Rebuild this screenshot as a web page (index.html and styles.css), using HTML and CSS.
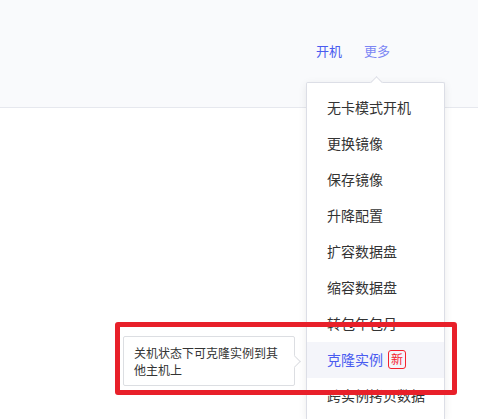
FILE: index.html
```html
<!DOCTYPE html>
<html lang="zh-CN">
<head>
<meta charset="utf-8">
<link rel="stylesheet" href="styles.css">
</head>
<body>
<div class="header">
  <nav class="actions">
    <a class="link">开机</a>
    <a class="link more">更多</a>
  </nav>
</div>
<div class="menu">
  <span class="arrow"></span>
  <ul class="list">
    <li class="item">无卡模式开机</li>
    <li class="item">更换镜像</li>
    <li class="item">保存镜像</li>
    <li class="item">升降配置</li>
    <li class="item">扩容数据盘</li>
    <li class="item">缩容数据盘</li>
    <li class="item">转包年包月</li>
    <li class="item active">克隆实例<span class="badge">新</span></li>
    <li class="item">跨实例拷贝数据</li>
  </ul>
</div>
<div class="tooltip">关机状态下可克隆实例到其他主机上<span class="tip-arrow"></span></div>
<div class="highlight"></div>
</body>
</html>
```

FILE: styles.css
```css
html, body {
  margin: 0;
  padding: 0;
  background: #ffffff;
  font-family: "Noto Sans CJK SC", "Noto Sans", sans-serif;
  overflow: hidden;
  height: 419px;
}
.header {
  height: 107px;
  background: #f9fafc;
  border-bottom: 1px solid #e6e8ee;
}
.actions {
  display: flex;
  justify-content: flex-end;
  gap: 22px;
  padding: 41px 88px 0 0;
  font-size: 13px;
  line-height: 20px;
}
.link {
  color: #4a5cf0;
  cursor: pointer;
}
.link.more {
  color: #7c86f4;
}
.menu {
  position: absolute;
  left: 306px;
  top: 82px;
  width: 137px;
  height: 336px;
  background: #fff;
  border: 1px solid #dcdee6;
  border-bottom: none;
  border-radius: 2px 2px 0 0;
  box-shadow: 0 2px 8px rgba(0, 0, 0, 0.08);
}
.arrow {
  position: absolute;
  top: -5px;
  left: 65px;
  width: 8px;
  height: 8px;
  background: #fff;
  border-left: 1px solid #dcdee6;
  border-top: 1px solid #dcdee6;
  transform: rotate(45deg);
}
.list {
  list-style: none;
  margin: 0;
  padding: 7px 0 0;
  height: 329px;
  overflow: hidden;
}
.item {
  height: 36px;
  line-height: 35px;
  padding-left: 20px;
  font-size: 14px;
  color: #333;
  white-space: nowrap;
}
.item.active {
  background: #f4f5fa;
  color: #4a5cf0;
}
.badge {
  display: inline-block;
  margin-left: 5px;
  padding: 0 2px;
  height: 17px;
  line-height: 16px;
  font-size: 12px;
  color: #f5222d;
  border: 1px solid #f5222d;
  border-radius: 3px;
  vertical-align: 1px;
}
.tooltip {
  position: absolute;
  left: 123px;
  top: 336px;
  width: 150px;
  padding: 7px 10px;
  background: #fff;
  border: 1px solid #dcdee2;
  border-radius: 2px;
  font-size: 12px;
  line-height: 17px;
  color: #333;
  height: 34px;
}
.tip-arrow {
  position: absolute;
  right: -5px;
  top: 20px;
  width: 8px;
  height: 8px;
  background: #fff;
  border-right: 1px solid #dcdee2;
  border-top: 1px solid #dcdee2;
  transform: rotate(45deg);
}
.highlight {
  position: absolute;
  left: 115px;
  top: 322px;
  width: 332px;
  height: 63px;
  border: 5px solid #e8202a;
  border-radius: 3px;
}
```
